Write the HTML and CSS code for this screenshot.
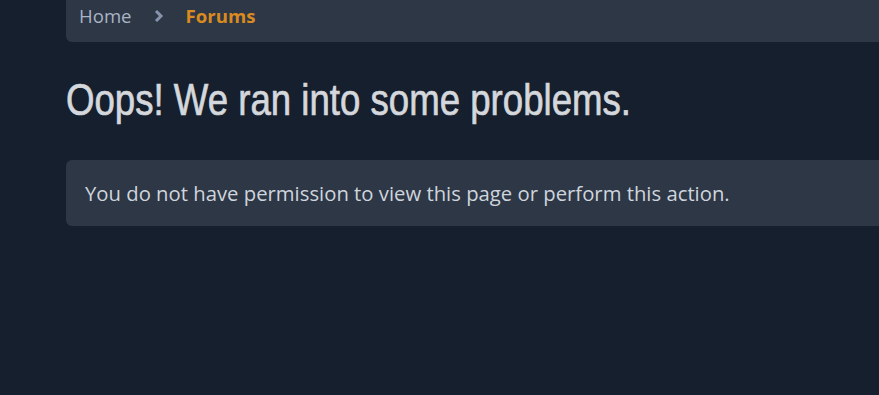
FILE: index.html
```html
<!DOCTYPE html>
<html lang="en">
<head>
  <meta charset="UTF-8">
  <meta name="viewport" content="width=device-width, initial-scale=1.0">
  <title>Oops! We ran into some problems.</title>
  <link rel="stylesheet" href="styles.css">
</head>
<body>
  <div class="page">
    <nav class="breadcrumb">
      <a href="#" class="crumb">Home</a>
      <svg class="crumb-sep" width="10" height="12" viewBox="0 0 10 12" aria-hidden="true">
        <path d="M2 1 L7 6 L2 11" fill="none" stroke="currentColor" stroke-width="3"/>
      </svg>
      <a href="#" class="crumb current">Forums</a>
    </nav>

    <h1 class="page-title">Oops! We ran into some problems.</h1>

    <div class="block-message">
      You do not have permission to view this page or perform this action.
    </div>
  </div>
</body>
</html>
```

FILE: styles.css
```css
html, body {
  margin: 0;
  padding: 0;
  background: #161f2e;
  overflow-x: hidden;
}

body {
  font-family: "Open Sans", "Liberation Sans", sans-serif;
  color: #cfd5dd;
  height: 395px;
}

.page {
  padding-left: 66px;
  margin-right: -20px;
}

.breadcrumb {
  display: flex;
  align-items: center;
  background: #2d3746;
  border-radius: 0 0 6px 6px;
  padding: 4px 13px 14px;
  font-size: 18.6px;
  line-height: 24px;
}

.crumb {
  color: #a9b4c4;
  text-decoration: none;
}

.crumb.current {
  color: #d98a20;
  font-weight: 700;
}

.crumb-sep {
  color: #8594ab;
  margin: 0 22px 0 22px;
}

.page-title {
  font-family: "Liberation Sans", sans-serif;
  font-weight: 400;
  font-size: 44px;
  line-height: 60px;
  color: #d4d7db;
  -webkit-text-stroke: 0.7px #d4d7db;
  margin: 28px 0 30px;
  transform: scaleX(0.832);
  transform-origin: left center;
}

.block-message {
  background: #2d3746;
  border-radius: 6px;
  padding: 19px;
  font-size: 20.3px;
  line-height: 28px;
  color: #cfd5dd;
}
```
